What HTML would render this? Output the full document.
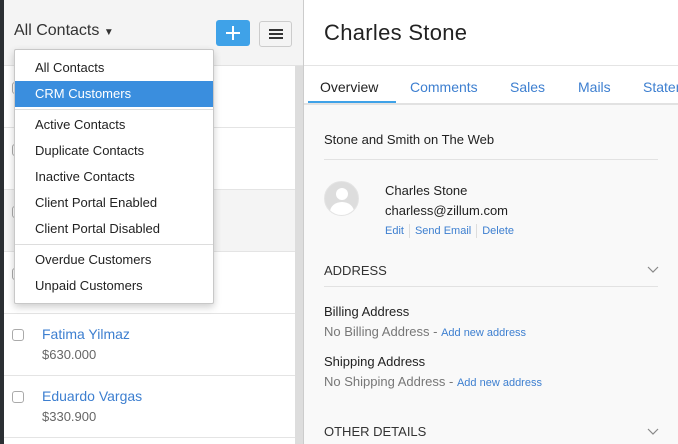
<!DOCTYPE html>
<html><head><meta charset="utf-8"><style>
*{box-sizing:border-box;margin:0;padding:0}
body{width:678px;height:444px;overflow:hidden;font-family:"Liberation Sans",sans-serif;background:#fff;position:relative;color:#222}
.abs{position:absolute}
.strip{left:0;top:0;width:4px;height:444px;background:#2b2f33}
.lefthead{left:4px;top:0;width:299px;height:66px;background:#f4f4f4;border-bottom:1px solid #e2e2e2}
.row{position:absolute;left:4px;width:291px;height:62px;border-bottom:1px solid #e4e4e4;background:#fff}
.cb{position:absolute;left:8px;width:12px;height:12px;border:1px solid #aaa;border-radius:3px;background:#fff}
.scroll{left:295px;top:66px;width:8px;height:378px;background:#ddd}
.vline{left:303px;top:0;width:1px;height:444px;background:#ccc}
.right{left:304px;top:0;width:374px;height:444px;background:#f9f9f9}
.rhead{left:304px;top:0;width:374px;height:66px;background:#fff;border-bottom:1px solid #e4e4e4}
.tabs{left:304px;top:66px;width:374px;height:39px;background:#fff;border-bottom:2px solid #e2e2e2;overflow:hidden;white-space:nowrap}
.tab{position:absolute;top:13px;font-size:14px;color:#3d7fd0}
.dd{left:14px;top:49px;width:200px;height:255px;background:#fff;border:1px solid #c8c8c8;border-radius:2px;box-shadow:0 3px 8px rgba(0,0,0,.2)}
.it{position:absolute;left:0;width:198px;height:26px;padding-left:20px;font-size:13px;line-height:26px;color:#222}
.sep{position:absolute;left:0;width:198px;height:1px;background:#ddd}
.link{color:#3d7fd0}
.bar{display:inline-block;width:1px;height:14px;background:#ddd;vertical-align:middle;margin:0 5px}
</style></head><body>
<div class="abs strip"></div>
<div class="abs lefthead"></div>
<div class="abs" style="left:14px;top:22px;font-size:16px;color:#333">All Contacts <span style="font-size:10px">▼</span></div>
<div class="abs" style="left:216px;top:20px;width:34px;height:26px;background:#3fa2e8;border-radius:3px">
<svg width="34" height="26" style="position:absolute;left:0;top:0"><path d="M17 6V20M10 13H24" stroke="#fff" stroke-width="2"/></svg></div>
<div class="abs" style="left:259px;top:21px;width:33px;height:26px;border:1px solid #ccc;border-radius:3px;background:#f4f4f4"><div style="position:absolute;left:9px;top:7px;width:14px;height:2px;background:#333;box-shadow:0 4px 0 #333,0 8px 0 #333"></div></div>

<div class="row" style="top:66px"><div class="cb" style="top:16px"></div></div>
<div class="row" style="top:128px"><div class="cb" style="top:16px"></div></div>
<div class="row" style="top:190px;background:#f4f4f4"><div class="cb" style="top:16px"></div></div>
<div class="row" style="top:252px"><div class="cb" style="top:16px"></div></div>
<div class="row" style="top:314px"><div class="cb" style="top:15px"></div>
<div class="abs" style="left:38px;top:12px;font-size:14px;color:#3d7fd0">Fatima Yilmaz</div>
<div class="abs" style="left:38px;top:33px;font-size:13px;color:#666">$630.000</div></div>
<div class="row" style="top:376px"><div class="cb" style="top:15px"></div>
<div class="abs" style="left:38px;top:12px;font-size:14px;color:#3d7fd0">Eduardo Vargas</div>
<div class="abs" style="left:38px;top:33px;font-size:13px;color:#666">$330.900</div></div>
<div class="abs scroll"></div>
<div class="abs vline"></div>

<div class="abs right"></div>
<div class="abs rhead"></div>
<div class="abs" style="left:324px;top:20px;font-size:22px;color:#222;letter-spacing:0.3px">Charles Stone</div>
<div class="abs tabs">
<div class="tab" style="left:16px;color:#222">Overview</div>
<div style="position:absolute;left:4px;top:35px;width:88px;height:3px;background:#3fa2e8"></div>
<div class="tab" style="left:106px">Comments</div>
<div class="tab" style="left:206px">Sales</div>
<div class="tab" style="left:274px">Mails</div>
<div class="tab" style="left:339px">Statements</div>
</div>
<div class="abs" style="left:324px;top:132px;font-size:13px">Stone and Smith on The Web</div>
<div class="abs" style="left:324px;top:159px;width:334px;height:1px;background:#e2e2e2"></div>
<div class="abs" style="left:324px;top:181px;width:35px;height:35px;border-radius:50%;background:#ddd;overflow:hidden;border:1px solid #e4e4e4">
<div style="position:absolute;left:11px;top:6px;width:12px;height:12px;border-radius:50%;background:#fff"></div>
<div style="position:absolute;left:5px;top:20px;width:24px;height:20px;border-radius:50%;background:#fff"></div></div>
<div class="abs" style="left:385px;top:183px;font-size:13px">Charles Stone</div>
<div class="abs" style="left:385px;top:203px;font-size:13px">charless@zillum.com</div>
<div class="abs" style="left:385px;top:224px;font-size:11px;color:#3d7fd0;white-space:nowrap">Edit<span class="bar"></span>Send Email<span class="bar"></span>Delete</div>
<div class="abs" style="left:324px;top:263px;font-size:13px;color:#333">ADDRESS</div>
<svg class="abs" style="left:647px;top:266px" width="12" height="8"><path d="M1 1L6 6L11 1" stroke="#888" fill="none" stroke-width="1.2"/></svg>
<div class="abs" style="left:324px;top:286px;width:334px;height:1px;background:#e2e2e2"></div>
<div class="abs" style="left:324px;top:304px;font-size:13px">Billing Address</div>
<div class="abs" style="left:324px;top:324px;font-size:13px;color:#777">No Billing Address - <span class="link" style="font-size:11px">Add new address</span></div>
<div class="abs" style="left:324px;top:354px;font-size:13px">Shipping Address</div>
<div class="abs" style="left:324px;top:374px;font-size:13px;color:#777">No Shipping Address - <span class="link" style="font-size:11px">Add new address</span></div>
<div class="abs" style="left:324px;top:424px;font-size:13px;color:#333">OTHER DETAILS</div>
<svg class="abs" style="left:647px;top:428px" width="12" height="8"><path d="M1 1L6 6L11 1" stroke="#888" fill="none" stroke-width="1.2"/></svg>

<div class="abs dd">
<div class="it" style="top:5px">All Contacts</div>
<div class="it" style="top:31px;background:#3a8ede;color:#fff;height:26px">CRM Customers</div>
<div class="sep" style="top:59px"></div>
<div class="it" style="top:62px">Active Contacts</div>
<div class="it" style="top:88px">Duplicate Contacts</div>
<div class="it" style="top:114px">Inactive Contacts</div>
<div class="it" style="top:140px">Client Portal Enabled</div>
<div class="it" style="top:166px">Client Portal Disabled</div>
<div class="sep" style="top:194px"></div>
<div class="it" style="top:197px">Overdue Customers</div>
<div class="it" style="top:223px">Unpaid Customers</div>
</div>
</body></html>
